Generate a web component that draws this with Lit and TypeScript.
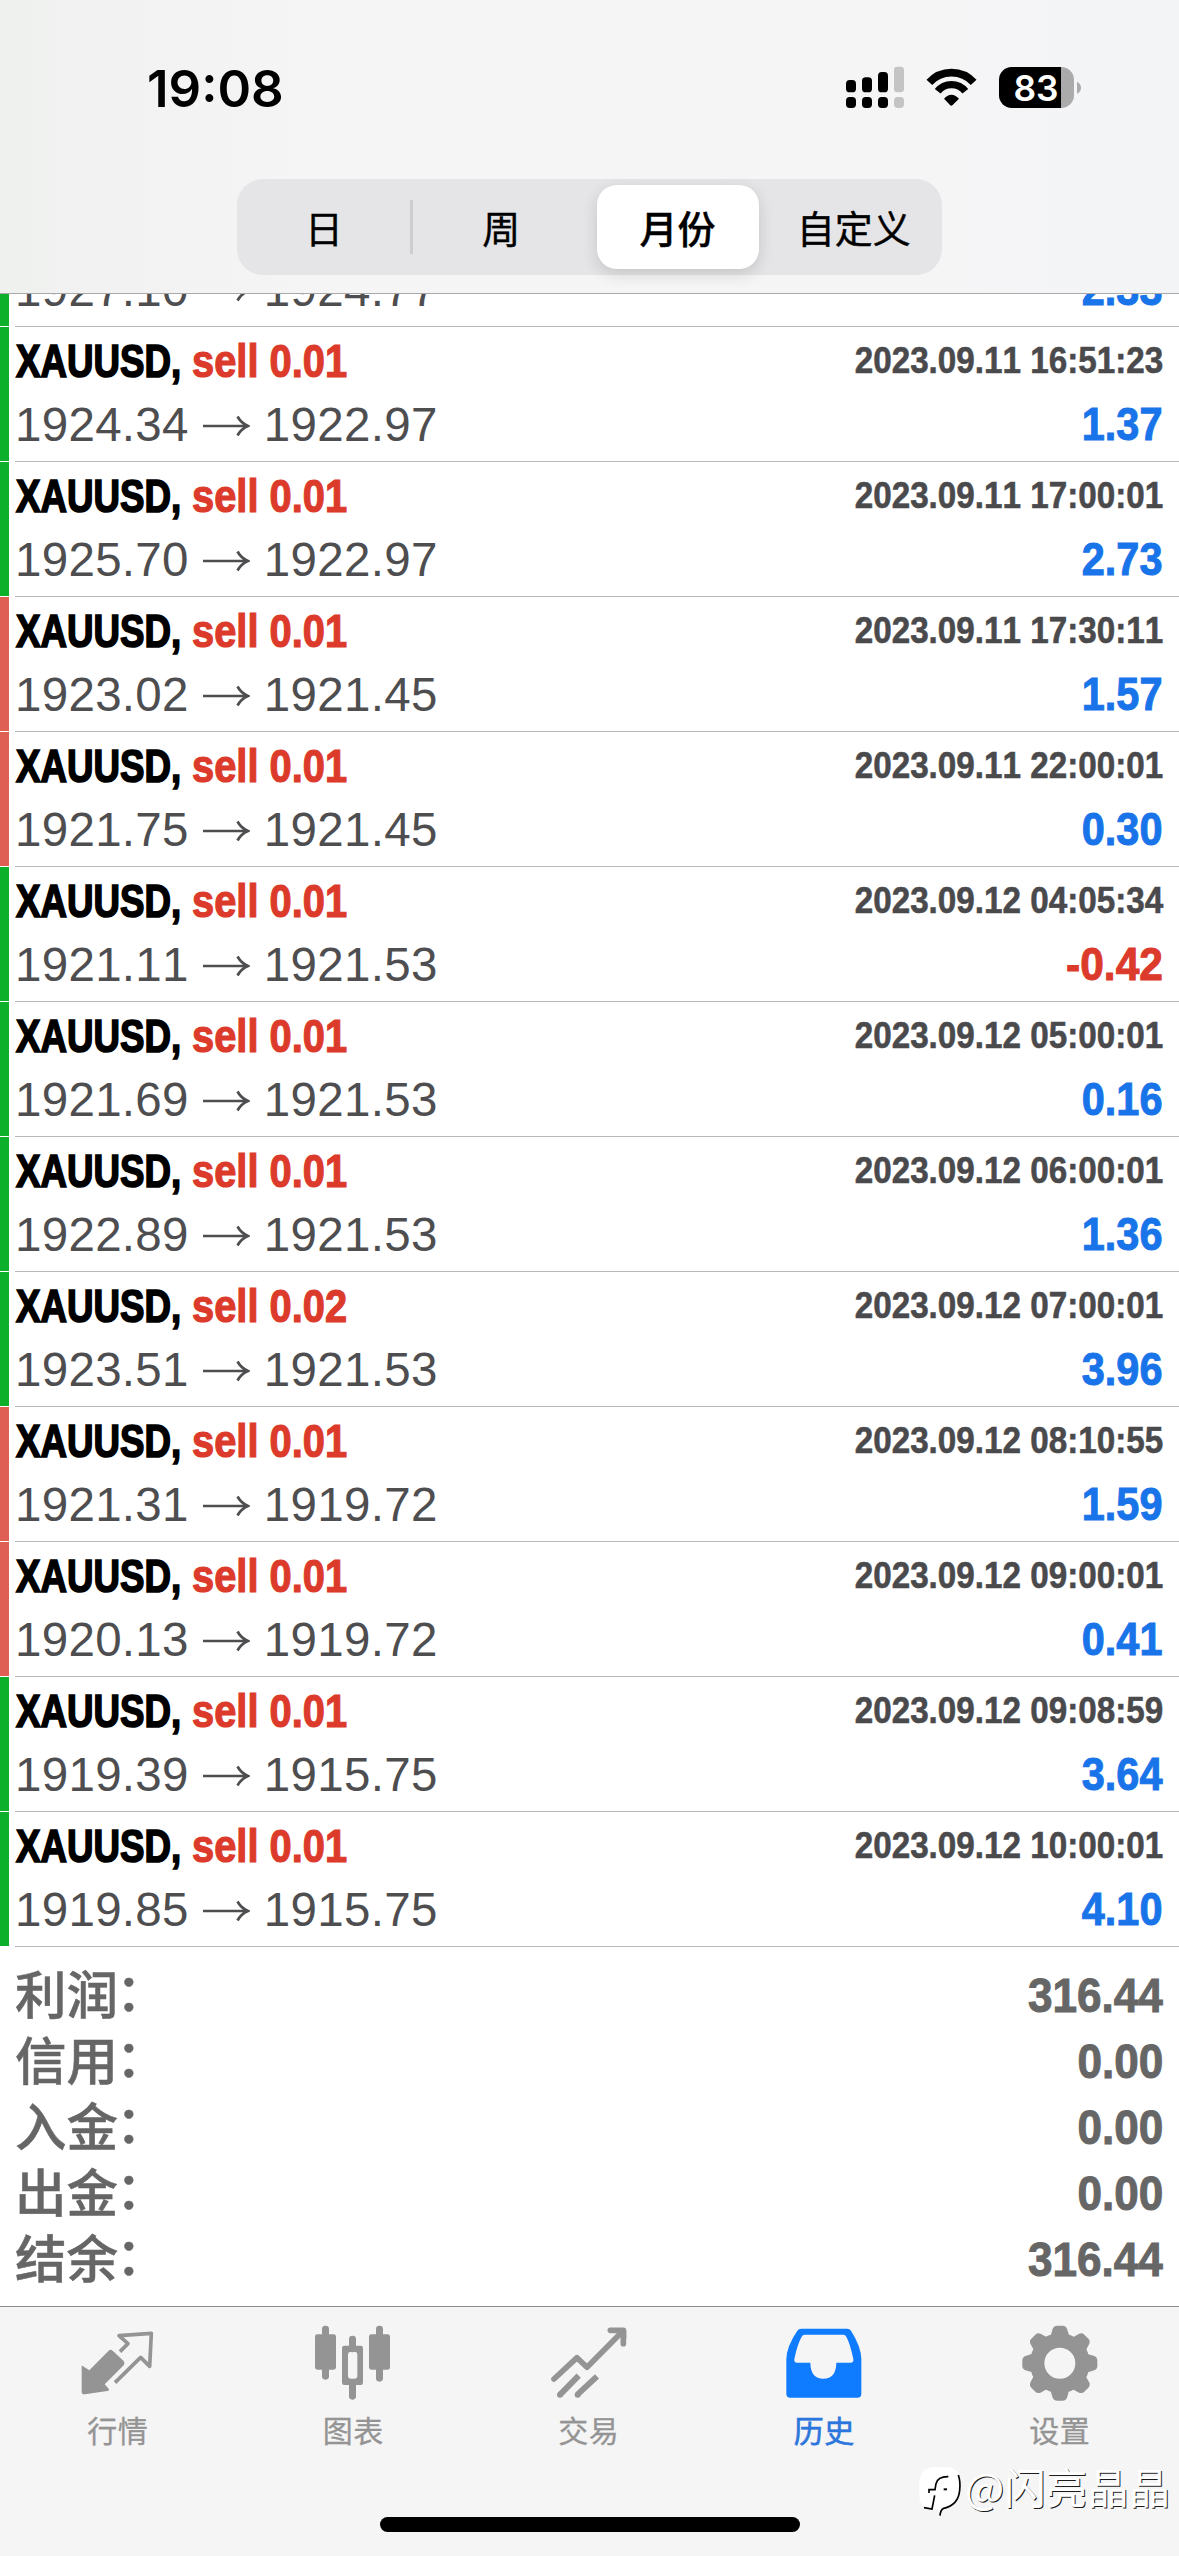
import { LitElement, html, css, svg } from "lit";
import { customElement } from "lit/decorators.js";
import { classMap } from "lit/directives/class-map.js";

interface Deal {
  volume: string;
  open: string;
  close: string;
  time: string;
  profit: string;
  mark: "green" | "red";
}

const deal = (
  mark: "green" | "red",
  open: string,
  close: string,
  time: string,
  profit: string,
  volume = "0.01"
): Deal => ({ mark, open, close, time, profit, volume });

const DEALS: Deal[] = [
  deal("green", "1924.34", "1922.97", "2023.09.11 16:51:23", "1.37"),
  deal("green", "1925.70", "1922.97", "2023.09.11 17:00:01", "2.73"),
  deal("red", "1923.02", "1921.45", "2023.09.11 17:30:11", "1.57"),
  deal("red", "1921.75", "1921.45", "2023.09.11 22:00:01", "0.30"),
  deal("green", "1921.11", "1921.53", "2023.09.12 04:05:34", "-0.42"),
  deal("green", "1921.69", "1921.53", "2023.09.12 05:00:01", "0.16"),
  deal("green", "1922.89", "1921.53", "2023.09.12 06:00:01", "1.36"),
  deal("green", "1923.51", "1921.53", "2023.09.12 07:00:01", "3.96", "0.02"),
  deal("red", "1921.31", "1919.72", "2023.09.12 08:10:55", "1.59"),
  deal("red", "1920.13", "1919.72", "2023.09.12 09:00:01", "0.41"),
  deal("green", "1919.39", "1915.75", "2023.09.12 09:08:59", "3.64"),
  deal("green", "1919.85", "1915.75", "2023.09.12 10:00:01", "4.10"),
];

// The row that is scrolled most of the way under the header.
const SCROLLED = deal("green", "1927.10", "1924.77", "", "2.33", "");

const TOTALS: [string, string][] = [
  ["利润", "316.44"],
  ["信用", "0.00"],
  ["入金", "0.00"],
  ["出金", "0.00"],
  ["结余", "316.44"],
];

const quotesIcon = svg`
  <path fill="currentColor" d="M244 229Q244 226 247 229L267 242L325 183Q331 178 337 183L370 214Q375 220 370 227L313 284L325 297Q328 302 321 304L254 314Q244 315 244 306Z"/>
  <path fill="none" stroke="currentColor" stroke-width="11" stroke-linejoin="round" d="M359 186L383 162L356 138L453 131L448 230L421 203L344 279"/>`;

const chartIcon = svg`
  <g fill="currentColor">
    <rect x="966" y="108" width="21" height="162" rx="10"/>
    <rect x="945" y="134" width="63" height="106" rx="7"/>
    <rect x="1128" y="108" width="21" height="168" rx="10"/>
    <rect x="1107" y="134" width="63" height="106" rx="7"/>
    <rect x="1047" y="138" width="21" height="50" rx="10"/>
    <rect x="1047" y="270" width="21" height="60" rx="10"/>
    <path fill-rule="evenodd" d="M1033 168H1082Q1089 168 1089 175V279Q1089 286 1082 286H1033Q1026 286 1026 279V175Q1026 168 1033 168ZM1053 186Q1044 186 1044 195V258Q1044 267 1053 267H1063Q1072 267 1072 258V195Q1072 186 1063 186Z"/>
  </g>`;

const tradeIcon = svg`
  <g fill="none" stroke="currentColor" stroke-linejoin="round">
    <path stroke-width="17" stroke-linecap="round" d="M461 268L530 204L560 233L664 128"/>
    <path stroke-width="17" stroke-linecap="round" d="M630 122H669V162"/>
    <path stroke-width="18" d="M480 314L535 258M532 314L590 260"/>
  </g>
  <g fill="currentColor"><circle cx="479" cy="315" r="9"/><circle cx="532" cy="315" r="9"/><path d="M645 115H669Q678 115 678 124V148Z"/></g>`;

const historyIcon = svg`
  <path fill="currentColor" fill-rule="evenodd" d="M66 117H203Q211 117 215 123Q245 170 246 208V312Q246 324 234 324H33Q21 324 21 312V208Q22 170 54 123Q58 117 66 117ZM76 135Q70 135 67 141Q54 164 45 208Q43 219 54 219H93Q94 267 132 267Q170 267 171 219H213Q224 219 222 208Q213 164 201 141Q198 135 192 135Z"/>`;

const TOOTH = "M812 146L820 117Q824 108 833 108H850Q859 108 863 117L872 146Z";
const gearIcon = svg`
  <g fill="currentColor">
    ${[0, 45, 90, 135, 180, 225, 270, 315].map(
      (a) => svg`<path d=${TOOTH} transform="rotate(${a} 841.5 220.5)"/>`
    )}
  </g>
  <circle cx="841.5" cy="220.5" r="68" fill="none" stroke="currentColor" stroke-width="43"/>`;

const TABS = [
  { label: "行情", icon: quotesIcon, x: 233 },
  { label: "图表", icon: chartIcon, x: 939 },
  { label: "交易", icon: tradeIcon, x: 446 },
  { label: "历史", icon: historyIcon, x: 14, active: true },
  { label: "设置", icon: gearIcon, x: 722 },
];

@customElement("status-bar")
class StatusBar extends LitElement {
  static styles = css`
    :host {
      display: flex;
      justify-content: space-between;
      align-items: flex-start;
      box-sizing: border-box;
      height: 129px;
      padding: 50px 89px 0 147px;
      font-family: Inter, "Liberation Sans", sans-serif;
    }
    .clock {
      font-size: 51px;
      font-weight: 600;
      line-height: 77px;
      color: #000;
    }
    .glyphs {
      display: block;
      width: 260px;
      height: 80px;
    }
    .level {
      font: 600 106px Inter, sans-serif;
    }
  `;

  render() {
    return html`
      <span class="clock">19:08</span>
      <svg class="glyphs" viewBox="0 0 780 240">
        <rect x="48" y="90" width="30" height="37" rx="11" />
        <rect x="96" y="82" width="30" height="45" rx="11" />
        <rect x="144" y="66" width="30" height="61" rx="11" />
        <rect x="192" y="50" width="30" height="77" rx="10" fill="#c4c4c4" />
        <rect x="48" y="141" width="30" height="33" rx="11" />
        <rect x="96" y="141" width="30" height="33" rx="11" />
        <rect x="144" y="141" width="30" height="33" rx="11" />
        <rect x="192" y="141" width="30" height="33" rx="11" fill="#c4c4c4" />
        <g fill="none" stroke="#000">
          <path stroke-width="23" d="M298 97A90 90 0 0 1 431 97" />
          <path stroke-width="22" d="M323 124A53 53 0 0 1 406 124" />
        </g>
        <path d="M342 146Q364 122 387 146L368 165Q364 169 360 165Z" />
        <path fill="#ababab" d="M680 51H694A38 38 0 0 1 732 89V136A38 38 0 0 1 694 174H680Z" />
        <path d="M545 51H693V174H545A38 38 0 0 1 507 136V89A38 38 0 0 1 545 51Z" />
        <path fill="#ababab" d="M741 95Q753 101 753 113Q753 125 741 131Z" />
        <text class="level" x="618" y="152" text-anchor="middle" fill="#fff">83</text>
      </svg>
    `;
  }
}

@customElement("period-switch")
class PeriodSwitch extends LitElement {
  static styles = css`
    :host {
      display: grid;
      grid-template-columns: repeat(4, 1fr);
      width: 705px;
      height: 96px;
      margin: 50px auto 0;
      border-radius: 26px;
      background: #e5e5e7;
      font-family: "Noto Sans CJK SC", sans-serif;
    }
    .option {
      display: flex;
      align-items: center;
      justify-content: center;
      margin: 6px 7px;
      border-radius: 20px;
      font-size: 38px;
      line-height: 84px;
      color: #000;
      -webkit-text-stroke: 0.4px #000;
    }
    .selected {
      background: #fff;
      font-weight: 500;
      box-shadow: 0 5px 16px rgba(0, 0, 0, 0.14);
    }
    .ruled {
      background: linear-gradient(#cdcdcf, #cdcdcf) no-repeat right center / 3px 54px;
      margin-right: 0;
      padding-right: 9px;
      border-radius: 0;
    }
  `;

  render() {
    return ["日", "周", "月份", "自定义"].map(
      (label, i) =>
        html`<span class=${classMap({ option: true, selected: i === 2, ruled: i === 0 })}>${label}</span>`
    );
  }
}

@customElement("deal-row")
class DealRow extends LitElement {
  static properties = { deal: { attribute: false } };
  declare deal: Deal;

  static styles = css`
    :host {
      display: flex;
      height: 135px;
      font-family: "Liberation Sans", Arial, sans-serif;
      font-kerning: none;
      white-space: nowrap;
    }
    .mark {
      width: 9px;
      height: 134px;
      margin-right: 6px;
    }
    .green {
      background: #0db02b;
    }
    .red {
      background: #e05f55;
    }
    .body {
      box-sizing: border-box;
      flex: 1;
      height: 135px;
      padding: 4px 16px 0 0;
      border-bottom: 1px solid #b9babb;
    }
    .line {
      display: flex;
      align-items: flex-start;
    }
    .first {
      height: 61px;
    }
    .symbol,
    .side {
      font-size: 46px;
      line-height: 60px;
      font-weight: 700;
      transform-origin: left center;
    }
    .symbol {
      width: 176px;
      margin-left: 1px;
      color: #000;
      -webkit-text-stroke: 1.7px #000;
      transform: scaleX(0.798);
    }
    .side {
      color: #dc3a2b;
      -webkit-text-stroke: 1.2px #dc3a2b;
      transform: scaleX(0.866);
    }
    .time {
      margin-left: auto;
      font-size: 37.5px;
      line-height: 59px;
      font-weight: 700;
      color: #4a4a4d;
      -webkit-text-stroke: 0.6px #4a4a4d;
      transform: scaleX(0.886);
      transform-origin: right center;
    }
    .price {
      font-size: 47.5px;
      line-height: 65px;
      letter-spacing: 0.3px;
      color: #4e4e50;
    }
    .arrow {
      width: 47px;
      height: 22px;
      margin: 23px 14px 0 14px;
    }
    .profit {
      margin-left: auto;
      font-size: 46.5px;
      line-height: 65px;
      font-weight: 700;
      color: #1874e8;
      -webkit-text-stroke: 1px #1874e8;
      transform: scaleX(0.892);
      transform-origin: right center;
    }
    .loss {
      color: #dc3a2b;
      -webkit-text-stroke-color: #dc3a2b;
      transform: scaleX(0.915);
    }
  `;

  render() {
    const d = this.deal;
    return html`
      <div class=${classMap({ mark: true, [d.mark]: true })}></div>
      <div class="body">
        <div class="line first">
          ${d.volume
            ? html`<span class="symbol">XAUUSD,</span>
                <span class="side">sell ${d.volume}</span>
                <span class="time">${d.time}</span>`
            : null}
        </div>
        <div class="line">
          <span class="price">${d.open}</span>
          <svg class="arrow" viewBox="0 0 47 22">
            <path d="M0 11H45M34.500 1.500Q38 8 45 11Q38 14 34.500 20.500" fill="none" stroke="#4e4e50" stroke-width="2.700" />
          </svg>
          <span class="price">${d.close}</span>
          <span class=${classMap({ profit: true, loss: d.profit.startsWith("-") })}>${d.profit}</span>
        </div>
      </div>
    `;
  }
}

@customElement("totals-list")
class TotalsList extends LitElement {
  static styles = css`
    :host {
      display: block;
      padding: 15px 16px 0 15px;
      color: #666;
    }
    .total {
      display: flex;
      justify-content: space-between;
      height: 66px;
    }
    .name {
      margin-top: -3px;
      font-family: "Noto Sans CJK SC", sans-serif;
      font-size: 51.5px;
      line-height: 66px;
      font-weight: 500;
      -webkit-text-stroke: 0.5px #666;
    }
    .colon {
      position: relative;
      top: -3px;
      left: -2px;
    }
    .amount {
      font-family: "Liberation Sans", Arial, sans-serif;
      font-kerning: none;
      font-size: 49px;
      line-height: 66px;
      font-weight: 700;
      -webkit-text-stroke: 1px #666;
      transform: scaleX(0.9);
      transform-origin: right center;
    }
  `;

  render() {
    return TOTALS.map(
      ([name, amount]) => html`<div class="total">
        <span class="name">${name}<span class="colon">：</span></span>
        <span class="amount">${amount}</span>
      </div>`
    );
  }
}

@customElement("tab-bar")
class TabBar extends LitElement {
  static styles = css`
    :host {
      position: relative;
      display: flex;
      flex-direction: column;
      align-items: center;
      box-sizing: border-box;
      height: 250px;
      border-top: 1px solid #8c8c8c;
      background: #f5f5f5;
      font-family: "Noto Sans CJK SC", sans-serif;
    }
    .tabs {
      display: grid;
      grid-template-columns: repeat(5, 235.5px);
      align-self: flex-start;
      height: 210px;
      padding-top: 16px;
      box-sizing: border-box;
    }
    .tab {
      display: flex;
      flex-direction: column;
      align-items: center;
      color: #949494;
    }
    .active {
      color: #0f7bff;
    }
    .icon {
      display: block;
      width: 80px;
      height: 80px;
    }
    .label {
      margin-top: 4px;
      font-size: 30px;
      line-height: 44px;
      letter-spacing: 0.4px;
      -webkit-text-stroke: 0.3px currentColor;
    }
    .active .label {
      color: #2b76dc;
      -webkit-text-stroke-width: 0.6px;
    }
    .home {
      width: 420px;
      height: 15px;
      border-radius: 8px;
      background: #000;
    }
    .watermark {
      position: absolute;
      left: 918px;
      top: 152px;
      display: flex;
      align-items: flex-start;
      white-space: nowrap;
    }
    .logo {
      width: 44px;
      height: 54px;
      margin-top: 5px;
    }
    .author {
      margin-left: 3px;
      font-size: 41.5px;
      line-height: 54px;
      color: #fff;
      text-shadow: 1px 1px 0 #1c1c1c;
    }
  `;

  render() {
    return html`
      <div class="tabs">
        ${TABS.map(
          (t) => html`<div class=${classMap({ tab: true, active: !!t.active })}>
            <svg class="icon" viewBox="${t.x} 100 240 240">${t.icon}</svg>
            <span class="label">${t.label}</span>
          </div>`
        )}
      </div>
      <div class="home"></div>
      <div class="watermark">
        <svg class="logo" viewBox="24 45 132 162">
          <path fill="#fff" d="M66 55H116Q150 60 150 98V128Q147 166 102 177Q94 181 89 194L84 181H64Q30 176 28 140V98Q30 62 66 55Z" />
          <g fill="none" stroke="#000">
            <path stroke-width="5" d="M145 78Q152 98 149 124Q145 168 101 178Q91 184 90 200" />
            <path stroke-width="5" d="M115 83Q84 82 78 104L75 122H57V132M74 139L66 180L42 176" />
          </g>
          <rect x="101" y="118" width="10" height="6" />
        </svg>
        <span class="author">@闪亮晶晶</span>
      </div>
    `;
  }
}

@customElement("app-root")
class AppRoot extends LitElement {
  static styles = css`
    :host {
      display: flex;
      flex-direction: column;
      width: 1179px;
      height: 2556px;
      overflow: hidden;
      background: #fff;
    }
    .header {
      box-sizing: border-box;
      height: 294px;
      border-bottom: 1px solid #a9a9aa;
      background: linear-gradient(90deg, #eef1ee 0, #f2f2f2 90px, #f4f3f4 200px, #f6f5f5 320px, #f5f5f6 900px, #f3f4f6 100%);
    }
    .history {
      flex: 1;
      min-height: 0;
      overflow: hidden;
    }
    .deals {
      margin-top: -102px;
    }
  `;

  render() {
    return html`
      <div class="header">
        <status-bar></status-bar>
        <period-switch></period-switch>
      </div>
      <div class="history">
        <div class="deals">${[SCROLLED, ...DEALS].map((d) => html`<deal-row .deal=${d}></deal-row>`)}</div>
        <totals-list></totals-list>
      </div>
      <tab-bar></tab-bar>
    `;
  }
}
